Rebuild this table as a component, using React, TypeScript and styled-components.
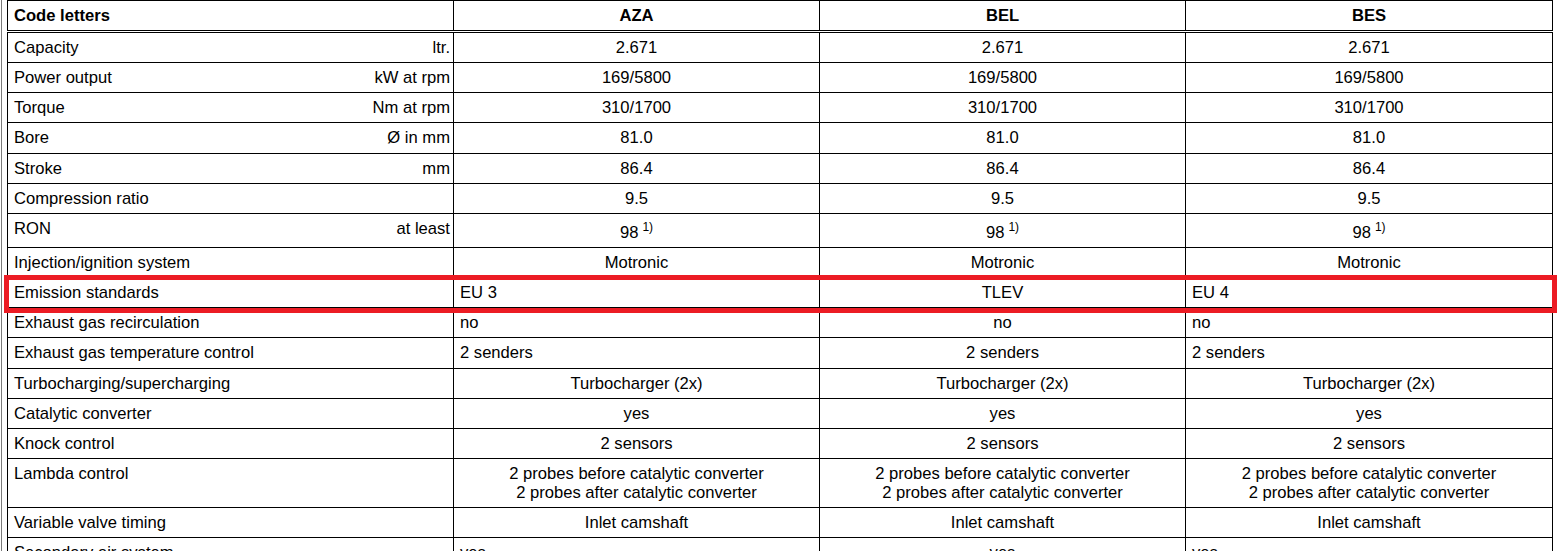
import React from "react";
import styled, { createGlobalStyle } from "styled-components";

const GlobalStyle = createGlobalStyle`
  html, body { margin: 0; padding: 0; background: #fff; overflow: hidden; }
  body { font-family: "Liberation Sans", Arial, sans-serif; color: #000; }
`;

const Page = styled.div`
  margin-left: 1px;
  padding-left: 5px;
  border-left: 1px solid #7a7a7a;
  min-height: 551px;
`;

const Table = styled.table`
  width: 1545px;
  table-layout: fixed;
  border-collapse: collapse;
  font-size: 16.6px;
  line-height: 19px;
`;

const HeadCell = styled.th<{ $align?: string }>`
  border: 1px solid #000;
  border-bottom: 3px double #000;
  padding: 5px 6px 5px 6px;
  font-weight: bold;
  text-align: ${(p) => p.$align || "center"};
`;

const Row = styled.tr<{ $highlight?: boolean }>`
  position: relative;
  ${(p) =>
    p.$highlight &&
    `
    &::after {
      content: "";
      position: absolute;
      left: -4px;
      right: -4px;
      top: -3px;
      bottom: -5px;
      border: 5px solid #ec1c24;
      pointer-events: none;
    }
  `}
`;

const LabelCell = styled.td`
  border: 1px solid #000;
  padding: 5px 3px 5.15px 6px;
  vertical-align: top;
`;

const LabelInner = styled.div`
  display: flex;
  justify-content: space-between;
  white-space: nowrap;
`;

const ValueCell = styled.td<{ $align?: string; $tall?: boolean }>`
  border: 1px solid #000;
  padding: ${(p) => (p.$tall ? "9px 6px 5.15px 6px" : "5px 6px 5.15px 6px")};
  vertical-align: top;
  text-align: ${(p) => p.$align || "center"};
  white-space: nowrap;
`;

const Sup = styled.sup`
  font-size: 12px;
  line-height: 0;
  vertical-align: 7px;
  margin-left: 4px;
`;

type Val = { text: React.ReactNode; align?: string };
type RowData = {
  label: string;
  unit?: string;
  values: Val[];
  tall?: boolean;
  highlight?: boolean;
};

const c = (text: React.ReactNode): Val => ({ text });
const l = (text: React.ReactNode): Val => ({ text, align: "left" });
const same = (text: React.ReactNode): Val[] => [c(text), c(text), c(text)];

const ron = (
  <>
    98<Sup>1)</Sup>
  </>
);

const lambda = (
  <>
    2 probes before catalytic converter
    <br />2 probes after catalytic converter
  </>
);

const rows: RowData[] = [
  { label: "Capacity", unit: "ltr.", values: same("2.671") },
  { label: "Power output", unit: "kW at rpm", values: same("169/5800") },
  { label: "Torque", unit: "Nm at rpm", values: same("310/1700") },
  { label: "Bore", unit: "Ø in mm", values: same("81.0") },
  { label: "Stroke", unit: "mm", values: same("86.4") },
  { label: "Compression ratio", values: same("9.5") },
  { label: "RON", unit: "at least", values: same(ron), tall: true },
  { label: "Injection/ignition system", values: same("Motronic") },
  {
    label: "Emission standards",
    values: [l("EU 3"), c("TLEV"), l("EU 4")],
    highlight: true,
  },
  { label: "Exhaust gas recirculation", values: [l("no"), c("no"), l("no")] },
  {
    label: "Exhaust gas temperature control",
    values: [l("2 senders"), c("2 senders"), l("2 senders")],
  },
  { label: "Turbocharging/supercharging", values: same("Turbocharger (2x)") },
  { label: "Catalytic converter", values: same("yes") },
  { label: "Knock control", values: same("2 sensors") },
  { label: "Lambda control", values: same(lambda) },
  { label: "Variable valve timing", values: same("Inlet camshaft") },
  { label: "Secondary air system", values: [l("yes"), c("yes"), l("yes")] },
];

export default function App() {
  return (
    <>
      <GlobalStyle />
      <Page>
        <Table>
          <colgroup>
            <col style={{ width: 446 }} />
            <col style={{ width: 366 }} />
            <col style={{ width: 366 }} />
            <col style={{ width: 367 }} />
          </colgroup>
          <thead>
            <tr>
              <HeadCell $align="left">Code letters</HeadCell>
              <HeadCell>AZA</HeadCell>
              <HeadCell>BEL</HeadCell>
              <HeadCell>BES</HeadCell>
            </tr>
          </thead>
          <tbody>
            {rows.map((r) => (
              <Row key={r.label} $highlight={r.highlight}>
                <LabelCell>
                  <LabelInner>
                    <span>{r.label}</span>
                    {r.unit && <span>{r.unit}</span>}
                  </LabelInner>
                </LabelCell>
                {r.values.map((v, i) => (
                  <ValueCell key={i} $align={v.align} $tall={r.tall}>
                    {v.text}
                  </ValueCell>
                ))}
              </Row>
            ))}
          </tbody>
        </Table>
      </Page>
    </>
  );
}
